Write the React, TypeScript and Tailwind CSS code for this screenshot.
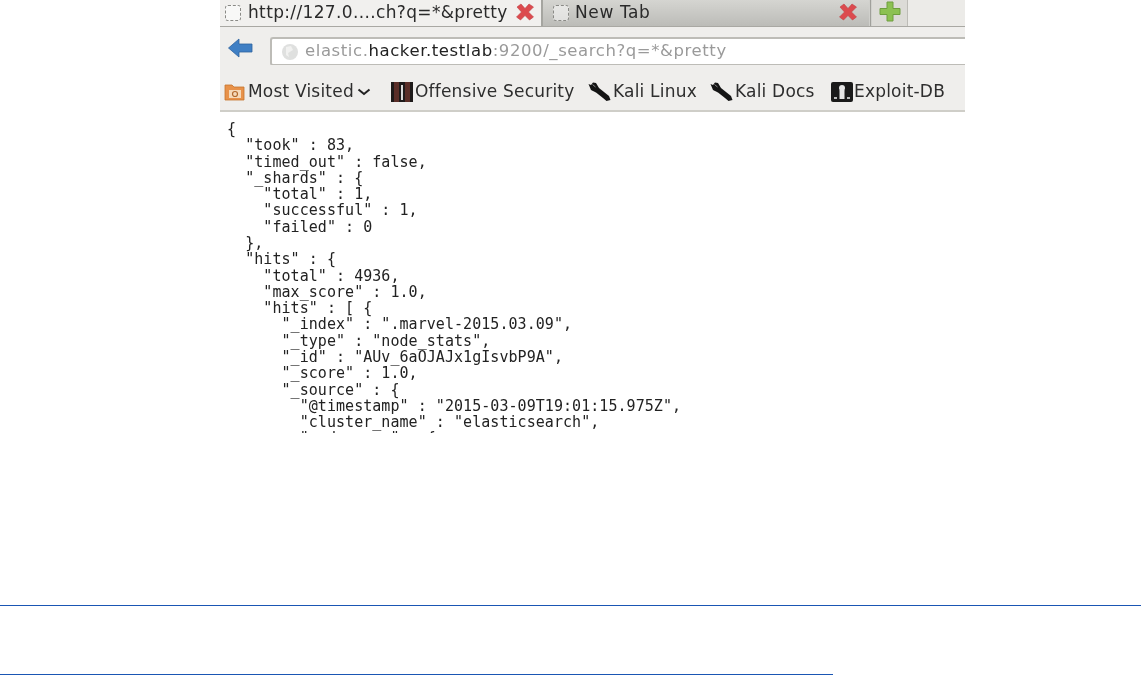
import React from "react";

const json = `{
  "took" : 83,
  "timed_out" : false,
  "_shards" : {
    "total" : 1,
    "successful" : 1,
    "failed" : 0
  },
  "hits" : {
    "total" : 4936,
    "max_score" : 1.0,
    "hits" : [ {
      "_index" : ".marvel-2015.03.09",
      "_type" : "node_stats",
      "_id" : "AUv_6aOJAJx1gIsvbP9A",
      "_score" : 1.0,
      "_source" : {
        "@timestamp" : "2015-03-09T19:01:15.975Z",
        "cluster_name" : "elasticsearch",
        "node_name" : {`;

function Favicon() {
  return <span className="block w-[16px] h-[16px] border border-dashed border-[#8a8a86] rounded-[3px] bg-white/50 shrink-0" />;
}

function CloseX() {
  return (
    <svg width="20" height="18" viewBox="0 0 20 18" className="shrink-0 -mt-[3px]">
      <path d="M2 4 L6 1 L10 5.5 L14 1 L18.5 4 L13.5 9 L18.5 14 L14.5 17 L10 12.5 L5.5 17 L1.5 14 L6.5 9 Z" fill="#dc4a4e" stroke="#c04044" strokeWidth="0.6" />
    </svg>
  );
}

function Wrench() {
  return (
    <svg width="23" height="21" viewBox="0 0 23 21" className="shrink-0 mr-[2px]">
      <path d="M0.5 3 L3 4 L5 1.5 L8 2 L11 7 L21 15 L22.5 19 L18.5 20 L15 17 L8 11.5 L3 9 Z" fill="#141414" />
      <path d="M4.5 3.5 L7.5 6" stroke="#888" strokeWidth="1" />
    </svg>
  );
}

function Bookmark({ icon, label, className }: { icon: React.ReactNode; label: string; className: string }) {
  return (
    <div className={`flex items-center shrink-0 ${className}`}>
      {icon}
      <span>{label}</span>
    </div>
  );
}

export default function App() {
  return (
    <div className="w-full h-[675px] bg-white overflow-hidden flex flex-col font-['DejaVu_Sans',sans-serif]">
      <div className="ml-[220px] w-[745px] h-[436px] shrink-0 overflow-hidden blur-[0.5px] flex flex-col">
        {/* Tabs */}
        <div className="h-[27px] flex shrink-0 bg-[#ecebe8] border-b border-[#a9a8a3]">
          <div className="w-[321px] flex items-center pl-[5px] bg-[#f1f0ee] text-[17px] tracking-[0.35px] text-[#2a2a2a]">
            <Favicon />
            <span className="ml-[7px] w-[267px] whitespace-nowrap">http://127.0....ch?q=*&amp;pretty</span>
            <CloseX />
          </div>
          <div className="w-[328px] flex items-center pl-[10px] bg-gradient-to-b from-[#d5d5d1] to-[#bcbcb8] border-l-2 border-[#a5a5a0] text-[17px] tracking-[0.6px] text-[#2a2a2a]">
            <Favicon />
            <span className="ml-[6px] w-[263px] whitespace-nowrap">New Tab</span>
            <CloseX />
          </div>
          <div className="w-[3px] bg-[#a0a09b] border-x border-[#d0d0cc]" />
          <div className="w-[36px] flex items-start pt-[1px] pl-[7px] bg-[#dcdbd7] border-r border-[#bdbcb7]">
            <svg width="22" height="21" viewBox="0 0 22 21">
              <path d="M8 1 H14 V7.5 H21 V13.5 H14 V20 H8 V13.5 H1 V7.5 H8 Z" fill="#8cc152" stroke="#6e9e3e" strokeWidth="1" />
            </svg>
          </div>
        </div>

        {/* Navigation */}
        <div className="h-[38px] flex items-end shrink-0 bg-[#efeeec] pl-[8px]">
          <svg width="25" height="20" viewBox="0 0 25 20" className="mb-[7px] shrink-0">
            <path d="M0.5 10 L11 1 V6 H24 V14 H11 V19 Z" fill="#3f7fc4" stroke="#2f639f" strokeWidth="0.8" />
          </svg>
          <div className="ml-[17px] flex-1 h-[29px] -mb-[1px] flex items-center pl-[9px] bg-white border-y-2 border-l-2 border-[#bdbcb7] rounded-l-[3px] text-[16.5px] tracking-[0.58px] text-[#9a9a9a] whitespace-nowrap">
            <svg width="18" height="18" viewBox="0 0 18 18" className="mr-[6px] shrink-0">
              <circle cx="9" cy="9" r="8" fill="#dfe0df" />
              <path d="M5 4 L10 3 L12 7 L7 10 L8 14 L5 12 Z" fill="#f1f1f0" />
            </svg>
            <span>
              elastic.<span className="text-[#222]">hacker.testlab</span>:9200/_search?q=*&amp;pretty
            </span>
          </div>
        </div>

        {/* Bookmarks */}
        <div className="h-[47px] flex items-center shrink-0 bg-[#efeeec] border-b-2 border-[#cfcec8] pl-[4px] pt-[8px] text-[17px] tracking-[0.2px] text-[#2e2e2e] whitespace-nowrap">
          <div className="w-[167px] flex items-center shrink-0">
            <svg width="21" height="19" viewBox="0 0 21 19" className="mr-[3px] shrink-0">
              <path d="M1 3 H8 L10 5 H20 V18 H1 Z" fill="#e8924a" stroke="#c5752f" strokeWidth="0.8" />
              <rect x="5" y="8" width="12" height="8" fill="#f5d9b8" />
              <circle cx="11" cy="12" r="2.5" fill="none" stroke="#b2692c" strokeWidth="1.2" />
            </svg>
            <span>Most Visited</span>
            <svg width="14" height="8" viewBox="0 0 14 8" className="ml-[3px]">
              <path d="M1.5 1.5 L7 6 L12.5 1.5" fill="none" stroke="#222" strokeWidth="2" />
            </svg>
          </div>
          <Bookmark
            className="w-[197px]"
            icon={
              <svg width="22" height="20" viewBox="0 0 22 20" className="mr-[2px] shrink-0">
                <rect width="22" height="20" fill="#1e1a1a" />
                <rect x="3" y="0" width="5" height="20" fill="#5a2e28" />
                <rect x="14" y="0" width="5" height="20" fill="#5a2e28" />
                <rect x="10" y="3" width="2" height="15" fill="#d8d8d8" />
              </svg>
            }
            label="Offensive Security"
          />
          <Bookmark className="w-[122px]" icon={<Wrench />} label="Kali Linux" />
          <Bookmark className="w-[121px]" icon={<Wrench />} label="Kali Docs" />
          <Bookmark
            className="w-[120px]"
            icon={
              <svg width="22" height="20" viewBox="0 0 22 20" className="mr-[1px] shrink-0">
                <rect width="22" height="20" rx="2" fill="#1a1a1a" />
                <circle cx="11" cy="6" r="3" fill="#e6e6e6" />
                <rect x="8.5" y="8" width="5" height="9" fill="#e6e6e6" />
                <rect x="3" y="15" width="3" height="2" fill="#bbb" />
                <rect x="16" y="15" width="3" height="2" fill="#bbb" />
              </svg>
            }
            label="Exploit-DB"
          />
        </div>

        {/* JSON body */}
        <div className="flex-1 overflow-hidden bg-white pl-[7px] pt-[9px]">
          <pre className="m-0 h-[312px] overflow-hidden font-['DejaVu_Sans_Mono',monospace] text-[15px] tracking-[0.05px] leading-[16.28px] text-[#222]">{json}</pre>
        </div>
      </div>

      <div className="mt-[169px] h-px w-[1141px] bg-[#1a56b4] shrink-0" />
      <div className="mt-[68px] h-px w-[833px] bg-[#1a56b4] shrink-0" />
    </div>
  );
}
